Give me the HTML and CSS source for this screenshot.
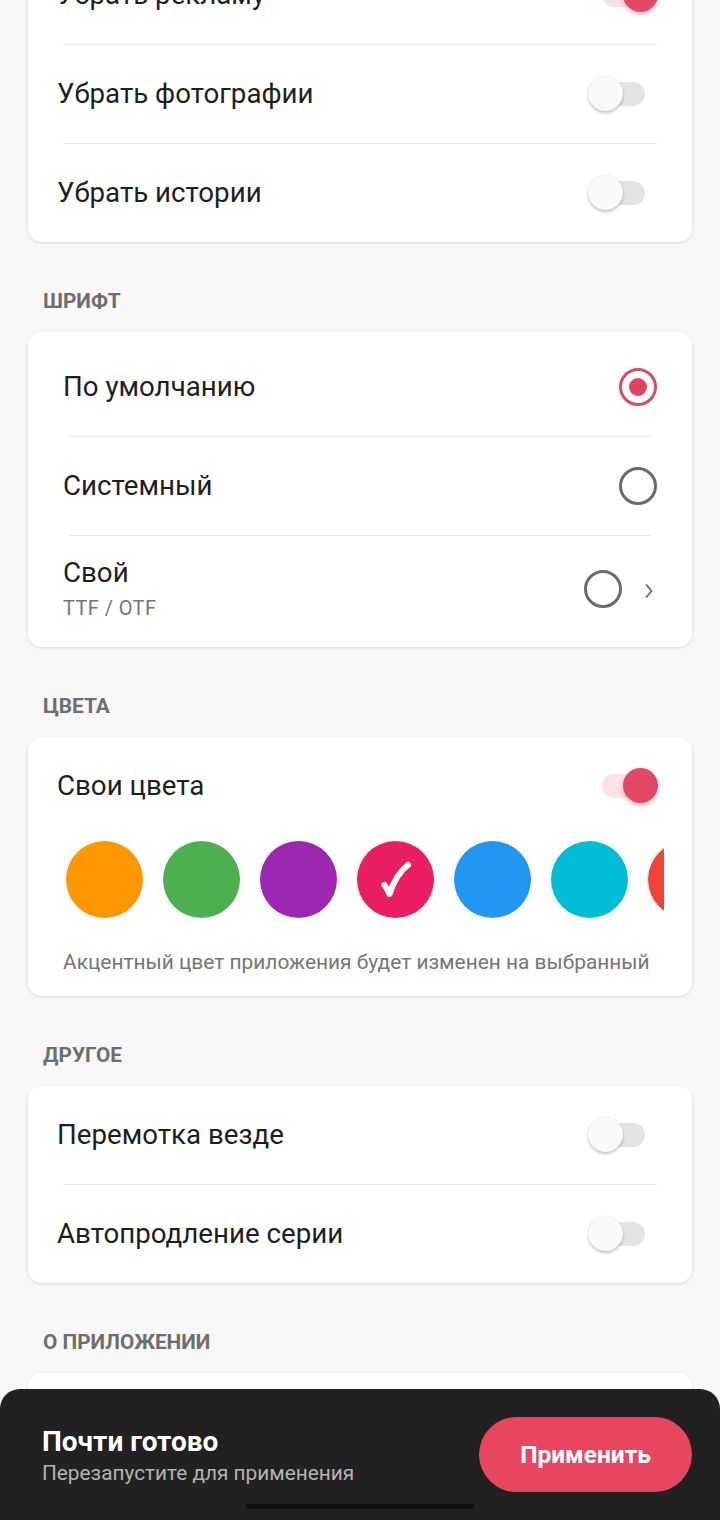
FILE: index.html
```html
<!DOCTYPE html>
<html lang="ru">
<head>
<meta charset="utf-8">
<link rel="stylesheet" href="styles.css">
</head>
<body>
<main class="page">
  <section class="card card-first">
    <div class="row"><span class="label">Убрать рекламу</span><span class="switch on"><span class="track"></span><span class="thumb"></span></span></div>
    <div class="divider"></div>
    <div class="row"><span class="label">Убрать фотографии</span><span class="switch"><span class="track"></span><span class="thumb"></span></span></div>
    <div class="divider"></div>
    <div class="row"><span class="label">Убрать истории</span><span class="switch"><span class="track"></span><span class="thumb"></span></span></div>
  </section>

  <h2 class="section-title">ШРИФТ</h2>
  <section class="card card-padded">
    <div class="row"><span class="label">По умолчанию</span><span class="radio checked"></span></div>
    <div class="divider"></div>
    <div class="row"><span class="label">Системный</span><span class="radio"></span></div>
    <div class="divider"></div>
    <div class="row row-tall">
      <div class="stack"><span class="label">Свой</span><span class="sub">TTF / OTF</span></div>
      <div class="trail"><span class="radio"></span><svg class="chevron" width="12" height="18" viewBox="0 0 12 18"><path d="M3.5 3 L8.5 9 L3.5 15" fill="none" stroke="#6a6a6a" stroke-width="1.8" stroke-linecap="round" stroke-linejoin="round"/></svg></div>
    </div>
  </section>

  <h2 class="section-title">ЦВЕТА</h2>
  <section class="card card-colors">
    <div class="row"><span class="label">Свои цвета</span><span class="switch on"><span class="track"></span><span class="thumb"></span></span></div>
    <div class="swatches">
      <span class="swatch c-orange"></span>
      <span class="swatch c-green"></span>
      <span class="swatch c-purple"></span>
      <span class="swatch c-pink"><svg class="check" width="34" height="38" viewBox="0 0 34 38"><path d="M5.5 24 C7.5 26.5 9 29.5 10.5 33 C14 22 20 11 29 4" fill="none" stroke="#ffffff" stroke-width="6" stroke-linecap="round" stroke-linejoin="round"/></svg></span>
      <span class="swatch c-blue"></span>
      <span class="swatch c-cyan"></span>
      <span class="swatch c-red"></span>
      <span class="swatch c-deep"></span>
    </div>
    <p class="caption">Акцентный цвет приложения будет изменен на выбранный</p>
  </section>

  <h2 class="section-title">ДРУГОЕ</h2>
  <section class="card">
    <div class="row"><span class="label">Перемотка везде</span><span class="switch"><span class="track"></span><span class="thumb"></span></span></div>
    <div class="divider"></div>
    <div class="row"><span class="label">Автопродление серии</span><span class="switch"><span class="track"></span><span class="thumb"></span></span></div>
  </section>

  <h2 class="section-title">О ПРИЛОЖЕНИИ</h2>
  <section class="card card-last">
    <div class="row"></div>
  </section>
</main>

<aside class="sheet">
  <div class="sheet-body">
    <div class="sheet-text">
      <div class="sheet-title">Почти готово</div>
      <div class="sheet-sub">Перезапустите для применения</div>
    </div>
    <button class="apply">Применить</button>
  </div>
  <div class="home-bar"></div>
</aside>
</body>
</html>
```

FILE: styles.css
```css
* { box-sizing: border-box; }

html, body {
  margin: 0;
  padding: 0;
}

body {
  background: #f7f7f7;
  font-family: Roboto, "Noto Sans", "Liberation Sans", sans-serif;
  color: #1e1e1e;
  width: 720px;
  height: 1520px;
  overflow: hidden;
}

.page {
  padding: 0 28px;
}

.card {
  background: #ffffff;
  border-radius: 14px;
  box-shadow: 0 1px 3px rgba(0, 0, 0, 0.13);
}

.card-first {
  margin-top: -54px;
}

.card-padded {
  padding: 6px;
}

.row {
  height: 98px;
  padding: 0 34px 0 29px;
  display: flex;
  align-items: center;
  justify-content: space-between;
}

.card-padded .row {
  padding: 0 29px 0 29px;
}

.row-tall {
  height: 105px;
}

.divider {
  height: 1px;
  background: #e6e6e6;
  margin: 0 35px;
}

.label {
  font-size: 27.7px;
  line-height: 32px;
  color: #1e1e1e;
}

.stack {
  display: flex;
  flex-direction: column;
  gap: 7px;
}

.sub {
  font-size: 20px;
  line-height: 24px;
  color: #757575;
  letter-spacing: 0.4px;
}

.trail {
  display: flex;
  align-items: center;
  gap: 21px;
  margin-right: 2px;
}

.chevron {
  display: block;
  margin-top: 4px;
}

.section-title {
  margin: 0;
  padding: 47px 15px 19px;
  font-size: 20.8px;
  line-height: 24px;
  font-weight: 700;
  color: #6e6e6e;
}

/* switch */
.switch {
  position: relative;
  width: 70px;
  height: 36px;
  flex: none;
}

.track {
  position: absolute;
  left: 14px;
  top: 6px;
  width: 43px;
  height: 24px;
  border-radius: 12px;
  background: #e4e4e4;
}

.thumb {
  position: absolute;
  left: 0;
  top: 0;
  width: 35px;
  height: 35px;
  border-radius: 50%;
  background: #fafafa;
  box-shadow: 0 2px 3px rgba(0, 0, 0, 0.22), 0 0 1px rgba(0, 0, 0, 0.15);
}

.switch.on .track {
  background: #fbe2e7;
}

.switch.on .thumb {
  left: 35px;
  background: #e24866;
  box-shadow: 0 3px 4px rgba(160, 30, 60, 0.28);
}

/* radio */
.radio {
  width: 38px;
  height: 38px;
  border-radius: 50%;
  border: 3px solid #6b6b6b;
  flex: none;
  display: flex;
  align-items: center;
  justify-content: center;
}

.radio.checked {
  border-color: #d64d68;
}

.radio.checked::after {
  content: "";
  width: 18px;
  height: 18px;
  border-radius: 50%;
  background: #e4405f;
}

/* colours */
.card-colors {
  padding-bottom: 22px;
}

.swatches {
  display: flex;
  gap: 20px;
  margin: 6px 28px 0 38px;
  overflow: hidden;
}

.swatch {
  flex: none;
  width: 77px;
  height: 77px;
  border-radius: 50%;
  display: flex;
  align-items: center;
  justify-content: center;
}

.c-orange { background: #ff9800; }
.c-green { background: #4caf50; }
.c-purple { background: #9c27b0; }
.c-pink { background: #e91e63; }
.c-blue { background: #2196f3; }
.c-cyan { background: #00bcd4; }
.c-red { background: #f44336; }
.c-deep { background: #673ab7; }

.check {
  display: block;
  margin-left: 1px;
}

.caption {
  margin: 32px 0 0;
  padding: 0 10px 0 35px;
  font-size: 20.9px;
  line-height: 24px;
  color: #757575;
  white-space: nowrap;
}

.card-last .row {
  height: 120px;
}

/* bottom sheet */
.sheet {
  position: fixed;
  left: 0;
  right: 0;
  bottom: 0;
  height: 131px;
  background: #212121;
  border-radius: 20px 20px 0 0;
  display: flex;
  flex-direction: column;
  align-items: center;
}

.sheet-body {
  width: 100%;
  padding: 28px 28px 0 42px;
  display: flex;
  align-items: center;
  justify-content: space-between;
}

.sheet-text {
  margin-top: 2px;
}

.sheet-title {
  font-size: 28px;
  line-height: 32px;
  font-weight: 700;
  color: #ffffff;
}

.sheet-sub {
  margin-top: 3px;
  font-size: 20.8px;
  line-height: 24px;
  color: #b3b3b3;
}

.apply {
  width: 213px;
  height: 75px;
  border: none;
  border-radius: 38px;
  background: #e8465f;
  color: #ffffff;
  font-family: Roboto, "Noto Sans", sans-serif;
  font-size: 24.5px;
  font-weight: 700;
}

.home-bar {
  margin-top: 12px;
  width: 228px;
  height: 5px;
  border-radius: 3px;
  background: #111111;
}
```
